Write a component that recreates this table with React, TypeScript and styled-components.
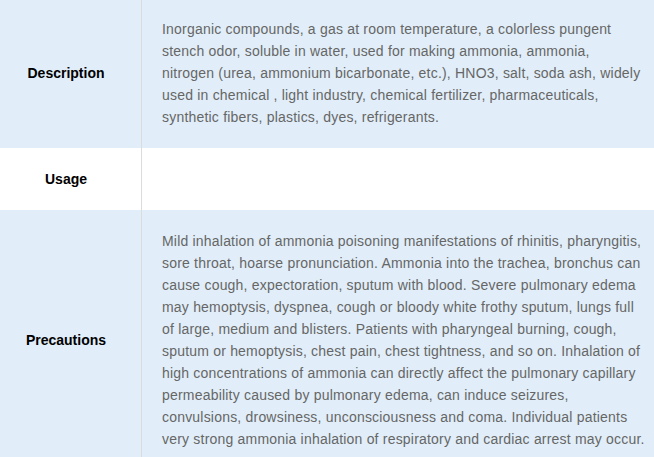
import React from "react";
import styled, { createGlobalStyle } from "styled-components";

const Global = createGlobalStyle`
  html, body { margin: 0; padding: 0; background: #ffffff; }
  body { font-family: "Liberation Sans", Arial, sans-serif; }
`;

const Table = styled.table`
  width: 654px;
  margin-top: -2px;
  border-collapse: collapse;
  table-layout: fixed;
  font-family: "Liberation Sans", Arial, sans-serif;
  font-size: 14px;
  line-height: 22px;
`;

const Row = styled.tr<{ $shade?: boolean }>`
  background: ${(p) => (p.$shade ? "#e1eef9" : "#ffffff")};
  & + & > td { border-top: 1px solid #dcdcdc; }
`;

const Label = styled.td`
  width: 132px;
  padding: 20px 9px 20px 0;
  text-align: center;
  vertical-align: middle;
  font-weight: bold;
  color: #000000;
  border-right: 1px solid #dcdcdc;
`;

const Value = styled.td`
  padding: 20px 9px 20px 20px;
  vertical-align: middle;
  color: #666666;
  text-align: left;
  letter-spacing: 0.2px;
`;

const rows = [
  {
    label: "Description",
    shade: true,
    text: "Inorganic compounds, a gas at room temperature, a colorless pungent stench odor, soluble in water, used for making ammonia, ammonia, nitrogen (urea, ammonium bicarbonate, etc.), HNO3, salt, soda ash, widely used in chemical , light industry, chemical fertilizer, pharmaceuticals, synthetic fibers, plastics, dyes, refrigerants.",
  },
  { label: "Usage", shade: false, text: "" },
  {
    label: "Precautions",
    shade: true,
    text: "Mild inhalation of ammonia poisoning manifestations of rhinitis, pharyngitis, sore throat, hoarse pronunciation. Ammonia into the trachea, bronchus can cause cough, expectoration, sputum with blood. Severe pulmonary edema may hemoptysis, dyspnea, cough or bloody white frothy sputum, lungs full of large, medium and blisters. Patients with pharyngeal burning, cough, sputum or hemoptysis, chest pain, chest tightness, and so on. Inhalation of high concentrations of ammonia can directly affect the pulmonary capillary permeability caused by pulmonary edema, can induce seizures, convulsions, drowsiness, unconsciousness and coma. Individual patients very strong ammonia inhalation of respiratory and cardiac arrest may occur.",
  },
];

export default function App() {
  return (
    <>
      <Global />
      <Table>
        <tbody>
          {rows.map((r) => (
            <Row key={r.label} $shade={r.shade}>
              <Label>{r.label}</Label>
              <Value>{r.text}</Value>
            </Row>
          ))}
        </tbody>
      </Table>
    </>
  );
}
